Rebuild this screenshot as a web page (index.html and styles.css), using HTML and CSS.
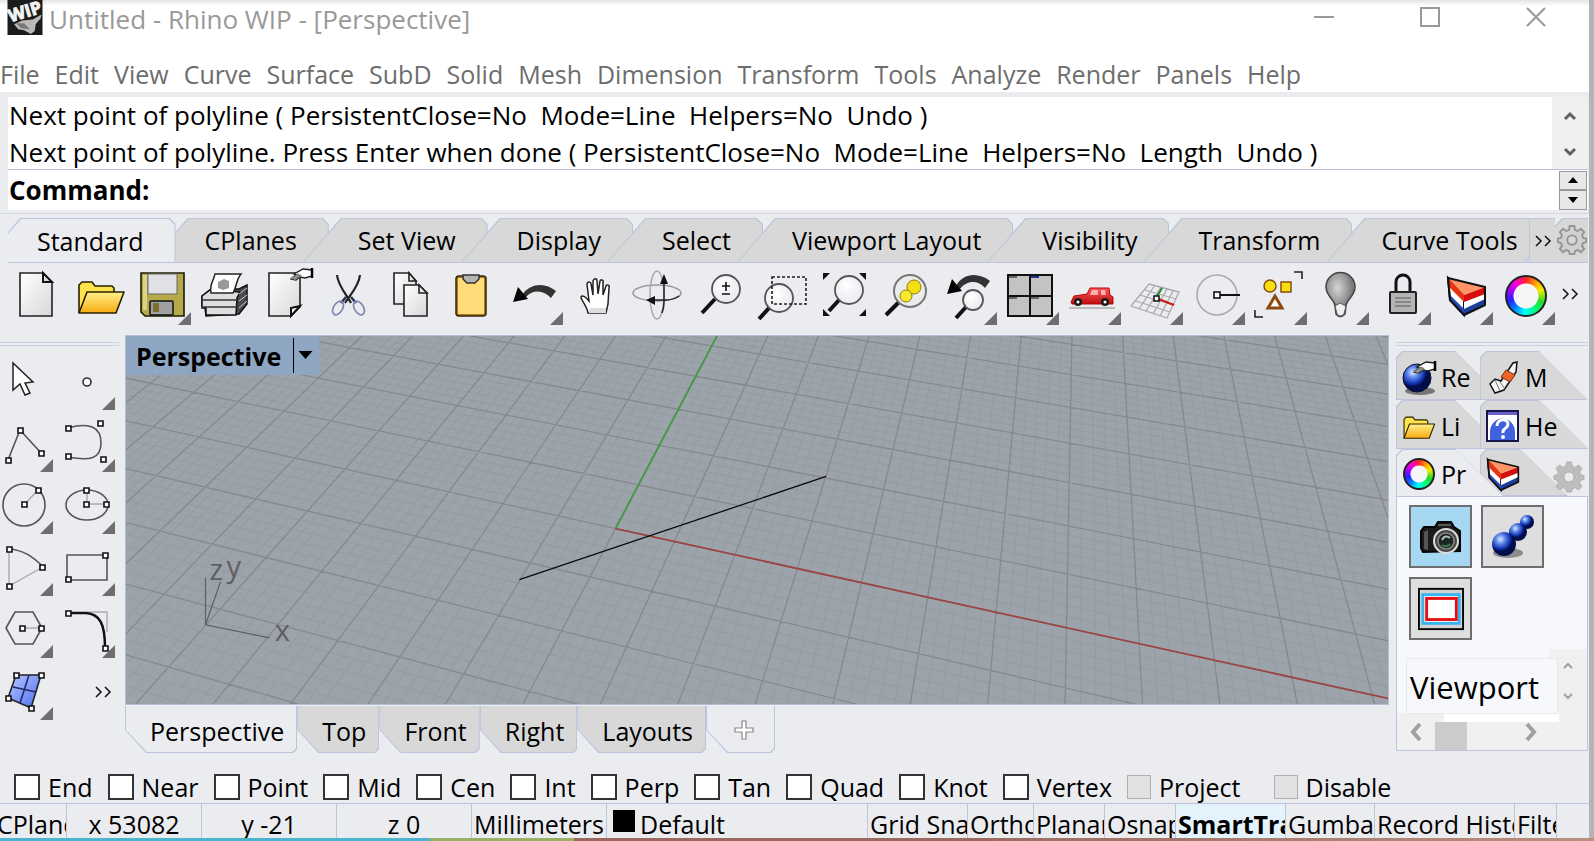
FILE: index.html
```html
<!DOCTYPE html>
<html lang="en">
<head>
<meta charset="utf-8">
<title>Untitled - Rhino WIP - [Perspective]</title>
<link rel="stylesheet" href="styles.css">
</head>
<body>
<svg class="defs" aria-hidden="true">
  <defs>
    <linearGradient id="paper" x1="0" y1="0" x2="1" y2="1"><stop offset="0" stop-color="#fff"/><stop offset="1" stop-color="#d8d8d8"/></linearGradient>
    <linearGradient id="gold" x1="0" y1="0" x2="0" y2="1"><stop offset="0" stop-color="#fff08a"/><stop offset="1" stop-color="#f7ab13"/></linearGradient>
    <linearGradient id="steel" x1="0" y1="0" x2="1" y2="1"><stop offset="0" stop-color="#f4f4f4"/><stop offset="1" stop-color="#808080"/></linearGradient>
    <linearGradient id="red" x1="0" y1="0" x2="0" y2="1"><stop offset="0" stop-color="#ff5a5a"/><stop offset="1" stop-color="#c00d0d"/></linearGradient>
    <linearGradient id="violet" x1="0" y1="0" x2="1" y2="1"><stop offset="0" stop-color="#b9c8ff"/><stop offset="1" stop-color="#4a6cf0"/></linearGradient>
    <radialGradient id="lens" cx=".4" cy=".35"><stop offset="0" stop-color="#fff"/><stop offset="1" stop-color="#eceef2"/></radialGradient>
    <radialGradient id="ball" cx=".35" cy=".3"><stop offset="0" stop-color="#dbe8ff"/><stop offset=".4" stop-color="#5d86ea"/><stop offset=".85" stop-color="#0a2aa4"/><stop offset="1" stop-color="#020d4a"/></radialGradient>
    <radialGradient id="bulb" cx=".4" cy=".35"><stop offset="0" stop-color="#d5d5d5"/><stop offset="1" stop-color="#7c7c7c"/></radialGradient>
    <symbol id="i-layers" viewBox="0 0 48 48">
      <path d="M7 8L23 25L23 45L9 30Z" fill="#fff" stroke="#111" stroke-width="2"/>
      <path d="M7 8L23 25V32L8 17Z" fill="#e63313"/><path d="M8 24L23 39V45L9 30Z" fill="#2448b8"/>
      <path d="M23 25L44 17V34L23 45Z" fill="#fff"/><path d="M23 25L44 17V24L23 32Z" fill="#d40d0d"/><path d="M23 39L44 29V35L23 45Z" fill="#1c3f9e"/>
      <path d="M7 8L44 17L23 25Z" fill="#ff9468"/><path d="M7 8L44 17V35L23 45L9 30Z" fill="none" stroke="#111" stroke-width="2" stroke-linejoin="round"/>
    </symbol>
    <symbol id="i-folder" viewBox="0 0 48 48">
      <path d="M2 43V15l3-3h10l3 4h17l2 2v8" fill="#ffe34d" stroke="#2b2000" stroke-width="1.6"/><path d="M2 43L10 22H47L39 43Z" fill="url(#gold)" stroke="#2b2000" stroke-width="1.6" stroke-linejoin="round"/>
    </symbol>
    <symbol id="i-glove" viewBox="0 0 24 14">
      <path d="M1 12L6 8L4 7L13 2L22 3V9L15 11L10 10L6 13Z" fill="#fff" stroke="#222" stroke-width="1.4"/><path d="M1 12L9 7M4 13L11 8" stroke="#777" stroke-width="2"/><path d="M22 1V11" stroke="#000" stroke-width="2.5"/>
    </symbol>
    <symbol id="i-gear" viewBox="0 0 32 32">
      <path d="M13.500 1h5l.7 4.200 2.800 1.200L25.500 4 29 7.500l-2.400 3.500 1.200 2.800 3.200.7v4l-3.200.7-1.200 2.800 2.400 3.500-3.500 3.500-3.500-2.400-2.800 1.200-.7 3.200h-5l-.7-3.200L10 26.600 6.500 29 3 25.500 5.400 22l-1.200-2.800L1 18.500v-4l3.200-.7L5.400 11 3 7.500 6.500 4 10 6.400l2.800-1.200zM16 11a5 5 0 1 0 0 10a5 5 0 1 0 0-10z" fill-rule="evenodd"/>
    </symbol>
    <symbol id="i-more" viewBox="0 0 18 12"><path d="M2 1L7 6L2 11M11 1L16 6L11 11" fill="none" stroke="#111" stroke-width="1.500"/></symbol>
  </defs>
</svg>

<div class="window">
  <header class="titlebar">
    <svg class="app-icon" viewBox="0 0 36 36" aria-hidden="true">
      <rect width="36" height="36" fill="#1b1b1b"/>
      <path d="M2 19L7 25L15 21L26 20L35 15L34 19L29 25L28 32L24 35L17 31L11 30Z" fill="#b9b9b9"/><path d="M9 24L14 29L23 30L17 24Z" fill="#777"/>
      <g class="wip" transform="rotate(-17 18 10)"><text x="0" y="18">WIP</text></g>
    </svg>
    <h1 class="title">Untitled - Rhino WIP - [Perspective]</h1>
    <div class="caption">
      <button aria-label="Minimize"><svg viewBox="0 0 20 20"><path d="M0 10H20" stroke-width="2"/></svg></button>
      <button aria-label="Maximize"><svg viewBox="0 0 20 20"><path d="M1 1H19V19H1Z" stroke-width="2"/></svg></button>
      <button aria-label="Close"><svg viewBox="0 0 20 20"><path d="M1 1L19 19M19 1L1 19" stroke-width="2"/></svg></button>
    </div>
  </header>

  <nav class="menu">
    <button>File</button><button>Edit</button><button>View</button><button>Curve</button><button>Surface</button><button>SubD</button><button>Solid</button><button>Mesh</button><button>Dimension</button><button>Transform</button><button>Tools</button><button>Analyze</button><button>Render</button><button>Panels</button><button>Help</button>
  </nav>

  <section class="command">
    <div class="history">
      <div class="lines"><p>Next point of polyline ( PersistentClose=No  Mode=Line  Helpers=No  Undo )</p><p>Next point of polyline. Press Enter when done ( PersistentClose=No  Mode=Line  Helpers=No  Length  Undo )</p></div>
      <div class="history-scroll">
        <button aria-label="Scroll up"><svg viewBox="0 0 12 10"><path d="M1 8L6 3L11 8"/></svg></button>
        <button aria-label="Scroll down"><svg viewBox="0 0 12 10"><path d="M1 2L6 7L11 2"/></svg></button>
      </div>
    </div>
    <div class="prompt">
      <label for="cmd">Command:</label><input id="cmd" type="text">
      <div class="spinner">
        <button aria-label="Previous"><svg viewBox="0 0 10 6"><path d="M0 6L5 0L10 6Z"/></svg></button>
        <button aria-label="Next"><svg viewBox="0 0 10 6"><path d="M0 0H10L5 6Z"/></svg></button>
      </div>
    </div>
  </section>

  <div class="toolbars">
    <div class="tabs">
      <div class="tab-list">
        <button class="tab active">Standard</button><button class="tab">CPlanes</button><button class="tab">Set View</button><button class="tab">Display</button><button class="tab">Select</button><button class="tab">Viewport Layout</button><button class="tab">Visibility</button><button class="tab">Transform</button><button class="tab">Curve Tools</button><button class="tab next" aria-label="Surface Tools"></button>
      </div>
      <div class="tabs-end">
        <button class="tabs-more" aria-label="More tabs"><svg viewBox="0 0 18 12"><use href="#i-more"/></svg></button>
        <button class="tabs-gear" aria-label="Options"><svg viewBox="0 0 32 32"><use href="#i-gear"/></svg></button>
      </div>
    </div>
    <div class="tools">
      <button class="tool" aria-label="New"><svg viewBox="0 0 48 48"><path d="M5 3H28L37 13V46H5Z" fill="url(#paper)" stroke="#222" stroke-width="1.6"/><path d="M28 3V12H37Z" fill="#ddd" stroke="#111" stroke-width="2"/></svg></button>
      <button class="tool" aria-label="Open"><svg viewBox="0 0 48 48"><use href="#i-folder" width="48" height="48"/></svg></button>
      <button class="tool more" aria-label="Save"><svg viewBox="0 0 48 48"><path d="M2 3H45V46H6L2 42Z" fill="#b5a94a" stroke="#1d1a05" stroke-width="1.600"/><path d="M4 5H8V40H4Z" fill="#dcd28a"/><rect x="9" y="4" width="29" height="20" fill="#dfe1e4" stroke="#666"/><rect x="11" y="31" width="23" height="14" rx="1" fill="#9fa0a2" stroke="#111" stroke-width="1.500"/><rect x="14" y="33" width="6" height="9" fill="#7b6f2a"/></svg></button>
      <button class="tool" aria-label="Print"><svg viewBox="0 0 48 48"><path d="M1 26L10 19H38L46 15V34L38 44L5 46L4 38L1 36Z" fill="#4a4a4a" stroke="#111" stroke-width="1.500"/><path d="M1 26L9 20L39 22L36 28L35 45H5V38H1Z" fill="#dedede" stroke="#111" stroke-width="1.500"/><path d="M1 30H36M2 37H36" stroke="#333" stroke-width="1.500"/><path d="M10 23C8 15 13 10 14 4H40C35 10 36 16 32 23Z" fill="#fff" stroke="#222" stroke-width="1.500"/><path d="M17 12L23 9L28 11V18L22 20L17 18Z" fill="#999"/><path d="M38 24L46 18M38 31L46 25M38 38L46 31" stroke="#ccc"/></svg></button>
      <button class="tool" aria-label="Document properties"><svg viewBox="0 0 48 48"><path d="M6 3H37V37L28 46H6Z" fill="url(#paper)" stroke="#222" stroke-width="1.600"/><path d="M28 46V38L37 36Z" fill="#fff" stroke="#111" stroke-width="2"/><use href="#i-glove" x="27" y="-3" width="24" height="14"/></svg></button>
      <button class="tool" aria-label="Cut"><svg viewBox="0 0 48 48" fill="none"><path d="M12 5C13 16 22 25 26 33M35 5C34 16 25 25 20 33" stroke="#222" stroke-width="2.200"/><path d="M21 27L16 33M26 27L31 33" stroke="#2c3260" stroke-width="2.500"/><ellipse cx="13" cy="38" rx="4.500" ry="7.500" transform="rotate(32 13 38)" stroke="#8089b2" stroke-width="1.800"/><ellipse cx="34" cy="38" rx="4.500" ry="7.500" transform="rotate(-32 34 38)" stroke="#8089b2" stroke-width="1.800"/></svg></button>
      <button class="tool" aria-label="Copy"><svg viewBox="0 0 48 48" fill="url(#paper)" stroke="#222" stroke-width="1.600"><path d="M7 3H22L29 11V34H7Z"/><path d="M22 3V11H29Z"/><path d="M17 15H32L40 23V46H17Z"/><path d="M32 15V23H40Z"/></svg></button>
      <button class="tool" aria-label="Paste"><svg viewBox="0 0 48 48"><rect x="7" y="6" width="30" height="40" rx="3" fill="#a87c20" stroke="#33250a" stroke-width="1.500"/><rect x="9" y="8" width="26" height="36" rx="1" fill="#ffdc78"/><path d="M14 5H30V9L26 13H18L14 9Z" fill="#b5b5b5" stroke="#333" stroke-width="1.500"/></svg></button>
      <button class="tool more" aria-label="Undo"><svg viewBox="0 0 48 48"><path d="M11 25C19 13 34 12 45 21L40 28C33 20 22 19 15 27Z" fill="#333"/><path d="M2 32L7 17L17 29Z" fill="#050505"/></svg></button>
      <button class="tool" aria-label="Pan"><svg viewBox="0 0 48 48"><path d="M15 43C14 36 8 30 8 27C9 25 12 26 16 31L14 14C15 11 18 12 18 14L20 25L20 11C21 8 24 8 24 11L25 24L27 11C28 9 31 10 30 13L30 25L33 16C34 14 37 15 36 18L35 34L33 43Z" fill="#fff" stroke="#222" stroke-width="1.500"/><path d="M17 38H33V43H16Z" fill="#ddd"/></svg></button>
      <button class="tool" aria-label="Rotate view"><svg viewBox="0 0 48 48" fill="none"><ellipse cx="22" cy="23" rx="24" ry="8" stroke="#999" stroke-width="1.500"/><ellipse cx="22" cy="25" rx="7" ry="24" stroke="#aaa" stroke-width="1.500"/><path d="M29 10V32Q29 38 27 43M14 30H31Q38 30 44 26" stroke="#222" stroke-width="1.500"/><path d="M25 14L29 4L33 14ZM20 26V35L11 30Z" fill="#111"/></svg></button>
      <button class="tool" aria-label="Zoom"><svg viewBox="0 0 48 48"><path d="M18 29L5 43" stroke="#111" stroke-width="4"/><circle cx="29" cy="19" r="14" fill="url(#lens)" stroke="#555" stroke-width="1.800"/><path d="M25 16H33M29 12V21M25 24H33" stroke="#111" stroke-width="1.600"/></svg></button>
      <button class="tool" aria-label="Zoom window"><svg viewBox="0 0 48 48"><path d="M10 38L0 49" stroke="#111" stroke-width="4"/><circle cx="20" cy="28" r="14" fill="url(#lens)" stroke="#555" stroke-width="1.800"/><rect x="13" y="7" width="34" height="27" fill="none" stroke="#222" stroke-width="1.600" stroke-dasharray="3 2"/></svg></button>
      <button class="tool" aria-label="Zoom extents"><svg viewBox="0 0 48 48"><path d="M18 30L8 41" stroke="#111" stroke-width="4"/><circle cx="28" cy="20" r="14" fill="url(#lens)" stroke="#555" stroke-width="1.800"/><path d="M2 3H9L2 10ZM38 3H45V10ZM2 39V46H9ZM45 39V46H38Z" fill="#111"/></svg></button>
      <button class="tool" aria-label="Zoom selected"><svg viewBox="0 0 48 48"><path d="M16 32L3 45" stroke="#111" stroke-width="4"/><circle cx="27" cy="21" r="16" fill="#ececec" stroke="#777" stroke-width="2"/><circle cx="31" cy="17" r="7" fill="#f5df12" stroke="#8c7d10"/><circle cx="23" cy="26" r="6" fill="#f8e92c" stroke="#8c7d10"/></svg></button>
      <button class="tool more" aria-label="Undo view change"><svg viewBox="0 0 48 48"><path d="M11 16C18 3 33 2 45 11L40 18C33 10 22 10 15 19Z" fill="#333"/><path d="M2 24L7 9L17 21Z" fill="#050505"/><path d="M21 37L11 48" stroke="#111" stroke-width="4"/><circle cx="28" cy="30" r="10" fill="url(#lens)" stroke="#555" stroke-width="1.800"/></svg></button>
      <button class="tool more" aria-label="Four viewports"><svg viewBox="0 0 48 48"><path d="M1 5H45V46H1Z" fill="#c3c3c3" stroke="#111" stroke-width="2"/><path d="M23 5V46M1 26H45" stroke="#111" stroke-width="2"/><path d="M2 7H10M2 28H10M24 28H32" stroke="#666" stroke-width="2"/><path d="M24 7H32" stroke="#1a3391" stroke-width="2"/></svg></button>
      <button class="tool more" aria-label="Set view"><svg viewBox="0 0 48 48"><path d="M0 38H46" stroke="#bbb" stroke-width="2"/><path d="M2 32L5 26L18 24L21 18H40L41 25L44 27V34H3Z" fill="url(#red)" stroke="#b10909"/><path d="M23 20L21 25H29V20ZM32 20V25H37L36 20Z" fill="#ffb0b0"/><circle cx="9" cy="32" r="4" fill="#1a1a1a"/><circle cx="36" cy="32" r="4" fill="#1a1a1a"/><circle cx="9" cy="32" r="1.500" fill="#fff"/><circle cx="36" cy="32" r="1.500" fill="#fff"/></svg></button>
      <button class="tool more" aria-label="Construction plane"><svg viewBox="0 0 48 48" fill="none"><path d="M18 14L48 22L36 48L0 36ZM14 20L45 29M9 25L42 35M5 31L39 42M24 15L8 39M30 17L15 41M36 19L22 44M42 21L29 46" stroke="#aaa" stroke-width="1.300"/><path d="M25 28L31 18" stroke="#1f8e2f" stroke-width="2"/><path d="M25 28L43 35" stroke="#d01818" stroke-width="2"/><rect x="23" y="26" width="5" height="5" fill="#fff" stroke="#111" stroke-width="1.500"/></svg></button>
      <button class="tool more" aria-label="Object snap"><svg viewBox="0 0 48 48"><circle cx="24" cy="25" r="20" fill="none" stroke="#aaa" stroke-width="1.600"/><path d="M24 25H47" stroke="#111" stroke-width="2"/><rect x="21" y="22" width="6" height="6" fill="#fff" stroke="#111" stroke-width="1.600"/></svg></button>
      <button class="tool more" aria-label="Select"><svg viewBox="0 0 48 48"><circle cx="15" cy="16" r="6" fill="#f7e00d" stroke="#8c4a10" stroke-width="1.500"/><rect x="26" y="12" width="10" height="10" fill="#f7e00d" stroke="#8c4a10" stroke-width="1.500"/><path d="M20 26L27 38H13Z" fill="#fff" stroke="#8c4a10" stroke-width="3"/><path d="M39 2H47V9M0 40V47H8" fill="none" stroke="#222" stroke-width="1.600"/></svg></button>
      <button class="tool more" aria-label="Hide objects"><svg viewBox="0 0 48 48"><path d="M18 36C18 30 9 26 9 17A14.500 14.500 0 0 1 38 17C38 26 29 30 29 36L28 44Q23 49 19 44Z" fill="url(#bulb)" stroke="#444" stroke-width="1.500"/><path d="M18 36L23 33L29 36L27 44Q23 48 20 44Z" fill="#eee" stroke="#555"/></svg></button>
      <button class="tool more" aria-label="Lock objects"><svg viewBox="0 0 48 48"><path d="M17 23V12a7 7 0 0 1 14 0V23" fill="none" stroke="#111" stroke-width="3"/><rect x="11" y="22" width="26" height="21" rx="1" fill="#b4b4b4" stroke="#222" stroke-width="2"/><path d="M16 28H32M16 32H32M16 36H32" stroke="#777" stroke-width="1.500"/></svg></button>
      <button class="tool more" aria-label="Edit layers"><svg viewBox="0 0 48 48"><use href="#i-layers" width="48" height="48"/></svg></button>
      <button class="tool more" aria-label="Object properties"><span class="wheel"></span></button>
      <button class="tools-more" aria-label="More tools"><svg viewBox="0 0 18 12"><use href="#i-more"/></svg></button>
    </div>
  </div>

  <main class="workspace">
    <aside class="side-tools">
      <button class="tool" aria-label="Select objects"><svg viewBox="0 0 48 48"><path d="M13 6V33L20 27L25 38L30 36L25 26L33 25Z" fill="#fff" stroke="#222" stroke-width="1.500"/></svg></button>
      <button class="tool more" aria-label="Point"><svg viewBox="0 0 48 48"><circle cx="25" cy="25" r="4" fill="#fff" stroke="#333" stroke-width="1.600"/></svg></button>
      <button class="tool more" aria-label="Polyline"><svg viewBox="0 0 48 48"><path d="M8 41L20 11L42 35" class="ln"/><path class="pt" d="M6 39h5v5h-5zM18 9h5v5h-5zM39 32h5v5h-5z"/></svg></button>
      <button class="tool more" aria-label="Curve"><svg viewBox="0 0 48 48"><path d="M6 9C28 3 39 8 39 24C39 40 28 42 6 38" class="ln"/><path class="pt" d="M4 7h5v5h-5zM36 2h5v5h-5zM39 38h5v5h-5zM4 35h5v5h-5z"/></svg></button>
      <button class="tool more" aria-label="Circle"><svg viewBox="0 0 48 48"><circle cx="24" cy="24" r="21" class="ln"/><path d="M24 24L38 9" class="thin"/><path class="pt" d="M22 21h5v5h-5zM36 7h5v5h-5z"/></svg></button>
      <button class="tool more" aria-label="Ellipse"><svg viewBox="0 0 48 48"><ellipse cx="25" cy="24" rx="21" ry="15" class="ln"/><path d="M25 9V23H45" class="thin"/><path class="pt" d="M22 7h5v5h-5zM22 21h5v5h-5zM42 21h5v5h-5z"/></svg></button>
      <button class="tool more" aria-label="Arc"><svg viewBox="0 0 48 48"><path d="M9 6V43L43 24" class="thin"/><path d="M9 6C23 7 34 14 43 24" class="ln"/><path class="pt" d="M7 4h5v5h-5zM40 22h5v5h-5zM7 41h5v5h-5z"/></svg></button>
      <button class="tool more" aria-label="Rectangle"><svg viewBox="0 0 48 48"><path d="M5 12H45V37H5Z" class="ln"/><path class="pt" d="M41 10h5v5h-5zM4 34h5v5h-5z"/></svg></button>
      <button class="tool more" aria-label="Polygon"><svg viewBox="0 0 48 48"><path d="M6 23L15 7H33L42 23L33 39H15Z" class="ln"/><path d="M23 23H42" class="thin"/><path class="pt" d="M20 21h5v5h-5zM39 21h5v5h-5z"/></svg></button>
      <button class="tool more" aria-label="Fillet curves"><svg viewBox="0 0 48 48"><path d="M25 7H45V27" class="thin"/><path d="M6 8H24C38 9 43 19 43 43" fill="none" stroke="#111" stroke-width="2.500"/><path class="pt" d="M4 6h5v5h-5zM41 41h5v5h-5z"/></svg></button>
      <button class="tool more" aria-label="Surface"><svg viewBox="0 0 48 48"><path d="M16 8H41L31 41L8 31Z" fill="url(#violet)" stroke="#222" stroke-width="1.600"/><path d="M29 8L20 36M13 20L36 25" stroke="#222b66" stroke-width="1.600"/><path class="pt" d="M14 6h5v5h-5zM39 6h5v5h-5zM29 39h5v5h-5zM6 29h5v5h-5z"/></svg></button>
      <button class="tools-more" aria-label="More tools"><svg viewBox="0 0 18 12"><use href="#i-more"/></svg></button>
    </aside>

    <section class="center">
      <div class="viewport">
        <svg class="scene" viewBox="126 336 1262 367" preserveAspectRatio="xMidYMid slice" role="img" aria-label="Perspective view">
          <path id="minor" fill="none" stroke="#949ca3" stroke-width="1"/>
          <path id="major" fill="none" stroke="#878890" stroke-width="1.300"/>
          <path id="axis-x" fill="none" stroke="#9c4544" stroke-width="1.800"/>
          <path id="axis-y" fill="none" stroke="#429843" stroke-width="1.800"/>
          <path d="M520 579L826 476" stroke="#0c0c0c" stroke-width="1.300"/>
          <path d="M207 577V624L271 637M207 624L222 581" fill="none" stroke="#5f5f61" stroke-width="1.200"/>
          <g class="axis-label"><text x="211" y="579">z</text><text x="228" y="576">y</text><text x="276" y="640">x</text></g>
        </svg>
        <div class="view-title"><span>Perspective</span><button aria-label="View menu"><svg viewBox="0 0 14 8"><path d="M0 0H14L7 8Z"/></svg></button></div>
      </div>
      <div class="view-tabs">
        <button class="view-tab active">Perspective</button><button class="view-tab">Top</button><button class="view-tab">Front</button><button class="view-tab">Right</button><button class="view-tab">Layouts</button><button class="view-tab active add" aria-label="Add layout"><svg viewBox="0 0 20 20"><path d="M8 1h4v7h7v4h-7v7h-4v-7h-7v-4h7z" fill="#fff" stroke="#888" stroke-width="1.200"/></svg></button>
      </div>
    </section>

    <aside class="panel">
      <div class="panel-tabs">
        <button class="ptab"><svg viewBox="0 0 34 34"><ellipse cx="18" cy="31" rx="15" ry="4" fill="#777"/><circle cx="15" cy="18" r="14" fill="url(#ball)" stroke="#0a1030"/><use href="#i-glove" x="11" y="0" width="24" height="14"/></svg>Re</button>
        <button class="ptab"><svg viewBox="0 0 34 34"><path d="M4 24L9 19L15 21L27 3L31 2L30 12L18 30L9 33Z" fill="#f5f5f5" stroke="#111" stroke-width="1.500"/><path d="M20 10L29 15L24 22L15 17Z" fill="#f0642a" stroke="#7a2f10"/><path d="M9 20L14 31M14 22L19 29" stroke="#777"/></svg>M</button>
        <button class="ptab"><svg viewBox="0 0 50 50"><use href="#i-folder" width="50" height="48"/></svg>Li</button>
        <button class="ptab"><svg viewBox="0 0 34 34"><rect x="1" y="2" width="31" height="30" fill="#fff" stroke="#16164a" stroke-width="2"/><path d="M2 3H31V6H2Z" fill="#6b62c8"/><path d="M4 31V23A12 13 0 0 1 29 23V31Z" fill="#3f63dc"/><path d="M11 17C11 9 22 9 22 15C22 20 16 19 17 24" fill="none" stroke="#fff" stroke-width="3"/><circle cx="17" cy="28" r="2" fill="#fff"/></svg>He</button>
        <button class="ptab active"><span class="wheel small"></span>Pr</button>
        <button class="ptab short" aria-label="Layers"><svg viewBox="5 5 41 41"><use href="#i-layers" width="48" height="48"/></svg></button>
        <button class="panel-gear" aria-label="Panel options"><svg viewBox="0 0 32 32"><use href="#i-gear"/></svg></button>
      </div>
      <div class="panel-body">
        <div class="modes">
          <button class="mode on" aria-label="Viewport properties"><svg viewBox="0 0 46 46"><path d="M3 17L6 13H17L20 8H33L36 13L42 17V37L5 38L3 34Z" fill="#1b1b1b" stroke="#050505" stroke-width="2"/><path d="M6 18V35L10 36V16Z" fill="#555"/><path d="M20 11H33" stroke="#555" stroke-width="2"/><circle cx="28" cy="27" r="12" fill="#4a4a4a" stroke="#ddd" stroke-width="2"/><circle cx="28" cy="27" r="8" fill="#1b2522" stroke="#888" stroke-width="1.500"/><path d="M24 26Q27 20 32 24" stroke="#a9c7b3" stroke-width="2" fill="none"/><path d="M24 31Q28 34 32 30" stroke="#3c7a4d" stroke-width="2" fill="none"/></svg></button>
          <button class="mode" aria-label="Material"><svg viewBox="0 0 46 46"><ellipse cx="18" cy="39" rx="15" ry="5" fill="#8c8c8c"/><circle cx="37" cy="8" r="7" fill="url(#ball)"/><circle cx="28" cy="18" r="9" fill="url(#ball)"/><circle cx="14" cy="30" r="12" fill="url(#ball)"/></svg></button>
          <button class="mode" aria-label="Safe frame"><svg viewBox="0 0 48 44"><rect x="1" y="1" width="46" height="42" fill="#d2d2d2" stroke="#050505" stroke-width="2"/><rect x="5" y="7" width="38" height="30" fill="#f2f2f2" stroke="#35b5f2" stroke-width="3"/><rect x="9" y="11" width="31" height="22" fill="#fff" stroke="#e60f14" stroke-width="3"/></svg></button>
        </div>
        <div class="prop-area">
          <div class="prop">Viewport</div>
          <div class="v-scroll"><svg viewBox="0 0 10 7"><path d="M1 6L5 2L9 6"/></svg><svg viewBox="0 0 10 7"><path d="M1 1L5 5L9 1"/></svg></div>
        </div>
        <div class="h-scroll"><svg viewBox="0 0 12 18"><path d="M10 1L3 9L10 17"/></svg><span class="thumb"></span><svg viewBox="0 0 12 18"><path d="M2 1L9 9L2 17"/></svg></div>
      </div>
    </aside>
  </main>

  <div class="osnap">
    <label><input type="checkbox">End</label><label><input type="checkbox">Near</label><label><input type="checkbox">Point</label><label><input type="checkbox">Mid</label><label><input type="checkbox">Cen</label><label><input type="checkbox">Int</label><label><input type="checkbox">Perp</label><label><input type="checkbox">Tan</label><label><input type="checkbox">Quad</label><label><input type="checkbox">Knot</label><label><input type="checkbox">Vertex</label><label class="wide"><input type="checkbox" disabled>Project</label><label class="wide"><input type="checkbox" disabled>Disable</label>
  </div>

  <footer class="status">
    <button>CPlane</button><span class="mid">x 53082</span><span class="mid">y -21</span><span class="mid">z 0</span><span>Millimeters</span><button class="layer"><i></i>Default</button><button>Grid Snap</button><button>Ortho</button><button>Planar</button><button>Osnap</button><button class="on">SmartTrack</button><button>Gumball</button><button>Record History</button><button>Filter</button><span class="end"></span>
  </footer>
</div>
<script src="grid.js"></script>
</body>
</html>
```
FILE: styles.css
```css
* { box-sizing: border-box; }
body {
  margin: 0;
  min-height: 100vh;
  display: flex;
  padding: 0 5px 3px 0;
  font: 25px/36px "Open Sans", "Noto Sans", sans-serif;
  color: #000;
  background:
    linear-gradient(90deg, #4bb3cf 0 27%, #9ab062 27% 36%, #9a6a60 36% 60%, #b98f80) bottom / 100% 3px no-repeat,
    linear-gradient(90deg, #8e8b62 0 2px, #a2a2a6 2px, #b4b4b8);
}
button { font: inherit; color: inherit; border: 0; padding: 0; margin: 0; background: none; white-space: nowrap; }
svg { display: block; overflow: visible; }
.defs { position: absolute; width: 0; height: 0; }
.window { flex: 1; min-width: 0; display: flex; flex-direction: column; background: #ebecf0; overflow: hidden; }

.titlebar { display: flex; align-items: flex-start; height: 55px; padding-left: 7px; gap: 6px; background: linear-gradient(#e4e4e4, #fff 6px); }
.app-icon { width: 36px; height: 35px; flex: none; overflow: hidden; }
.wip { font: bold 18px "Open Sans", sans-serif; fill: #f2f2f2; stroke: #f2f2f2; }
.title { margin: 0; line-height: 38px; font-size: 26px; font-weight: 400; color: #999; flex: 1; }
.caption { display: flex; gap: 86px; padding: 7px 43px 0 0; }
.caption button { width: 20px; height: 20px; }
.caption svg { width: 20px; height: 20px; fill: none; stroke: #999; }

.menu { display: flex; gap: 15px; height: 37px; background: #fff; color: #6d6d6d; }
.menu button { line-height: 36px; }

.command { margin: 5px 0 0; padding: 0 1px 0 8px; }
.history { display: flex; height: 72px; background: #fff; }
.lines { flex: 1; min-width: 0; padding-left: 1px; overflow: hidden; font-size: 26px; }
.lines p { margin: 0; line-height: 37px; white-space: pre; }
.history-scroll { width: 36px; background: #f0f0f0; display: flex; flex-direction: column; align-items: center; justify-content: space-between; padding: 14px 0 12px; }
.history-scroll svg { width: 12px; height: 10px; fill: none; stroke: #606060; stroke-width: 3; }
.prompt { display: flex; height: 41px; background: #fff; border-top: 1px solid #b8c4d2; padding-left: 1px; align-items: center; }
.prompt label { font-size: 26px; font-weight: 700; }
.prompt input { flex: 1; border: 0; outline: 0; background: none; font: inherit; height: 36px; }
.spinner { width: 28px; height: 39px; margin-right: 1px; display: flex; flex-direction: column; }
.spinner button { flex: 1; background: #e8e8e8; border: 1px solid #999; display: grid; place-items: center; }
.spinner svg { width: 10px; height: 6px; }

.toolbars { margin-top: 3px; border-top: 1px solid #d5d9e4; padding: 4px 0 0; }
.tabs { position: relative; height: 45px; margin: 0 1px 0 8px; overflow: hidden; border-bottom: 1px solid #bcc5dd; }
.tab-list { display: flex; }
.tab { position: relative; isolation: isolate; flex: none; height: 44px; line-height: 44px; padding: 0 32px 0 55px; margin-left: -26px; }
.tab:first-child { margin-left: -26px; }
.tab::before, .tab::after { content: ""; position: absolute; z-index: -1; inset: 0; background: #bcc5dd; clip-path: polygon(0 100%, 38px 0, calc(100% - 6px) 0, 100% 6px, 100% 100%); }
.tab::after { inset: 1px 1px 0 1px; background: #d8d8d8; }
.tab.active { z-index: 2; height: 45px; }
.tab.active::after { background: #ebecf0; }
.tab.next { flex: 1; }
.tabs-end { position: absolute; z-index: 3; right: 0; top: 0; display: flex; height: 44px; }
.tabs-more { width: 26px; border-left: 1px solid #bcc5dd; border-top: 1px solid #bcc5dd; background: #d8d8d8; display: grid; place-items: center; }
.tabs-gear { width: 33px; display: grid; place-items: center; }
.tabs-more svg, .tools-more svg { width: 18px; height: 12px; }
.tabs-gear svg { width: 30px; height: 30px; fill: #d0d0d0; stroke: #949494; stroke-width: 2; }
.tools { display: flex; height: 72px; padding-left: 5px; }
.tool { position: relative; flex: none; width: 62px; height: 62px; padding: 7px 4px 7px 10px; }
.tool svg { width: 48px; height: 48px; }
.tool.more::after { content: ""; position: absolute; right: 0; bottom: 0; width: 13px; height: 13px; background: #6e6e70; clip-path: polygon(100% 0, 100% 100%, 0 100%); }
.tools-more { width: 30px; height: 62px; display: grid; place-items: center; }
.wheel { flex: none; display: block; width: 42px; height: 42px; margin: 4px 0 0 2px; border: 2px solid #222; border-radius: 50%; background: radial-gradient(circle, #f6f6f8 0 12px, transparent 13px), conic-gradient(#f22, #fb0 45deg, #ee0 70deg, #2d2 110deg, #0f8 150deg, #0ff 185deg, #08f 220deg, #22f 255deg, #a0f 290deg, #f0c 325deg, #f22); }
.wheel.small { width: 32px; height: 32px; margin: 0 1px; background: radial-gradient(circle, #f6f6f8 0 8px, transparent 9px), conic-gradient(#f22, #fb0 45deg, #ee0 70deg, #2d2 110deg, #0f8 150deg, #0ff 185deg, #08f 220deg, #22f 255deg, #a0f 290deg, #f0c 325deg, #f22); }

.workspace { flex: 1; min-height: 0; display: flex; }
.side-tools { width: 119px; margin: 7px 6px 0 0; padding: 5px 0 0; border-top: 1px solid #c9d1e3; box-shadow: inset 0 2px #ebecf0, inset 0 3px #c9d1e3; display: grid; grid-template-columns: 53px 62px; grid-auto-rows: 62px; align-content: start; }
.side-tools .tool { width: auto; padding: 9px 5px 5px 0; display: flex; justify-content: flex-end; }
.side-tools .tools-more { justify-self: end; width: 24px; height: 67px; }
.ln { fill: none; stroke: #555; stroke-width: 1.6px; }
.thin { fill: none; stroke: #aaa; stroke-width: 1.4px; }
.pt { fill: #fff; stroke: #111; stroke-width: 1.6px; }

.center { flex: 1; min-width: 0; display: flex; flex-direction: column; }
.viewport { position: relative; flex: 1; min-height: 0; border: 1px solid #b4bfd3; background: #9ca3ab; overflow: hidden; }
.scene { position: absolute; inset: 0; width: 100%; height: 100%; overflow: hidden; }
.axis-label { font: 29px "Open Sans", sans-serif; fill: #5f5f61; }
.view-title { position: absolute; left: 0; top: 0; display: flex; height: 39px; padding-left: 10px; background: #8ea6c2; font-size: 25px; font-weight: 700; line-height: 41px; }
.view-title button { width: 26px; margin: 2px 0 2px 12px; border-left: 1px solid #000; padding: 0 0 2px 4px; }
.view-title svg { width: 15px; height: 8px; }
.view-tabs { display: flex; height: 56px; padding-top: 1px; }
.view-tab { position: relative; isolation: isolate; height: 47px; line-height: 50px; padding: 0 13px 0 25px; }
.view-tab::before, .view-tab::after { content: ""; position: absolute; z-index: -1; inset: 0; background: #bcc5dd; clip-path: polygon(0 0, 100% 0, 100% calc(100% - 4px), calc(100% - 4px) 100%, 21px 100%, 0 24px); }
.view-tab::after { inset: 0 1px 1px 1px; background: #d8d8d8; }
.view-tab.active::after { background: #ebecf0; }
.view-tab.add { width: 69px; }
.view-tab.add svg { width: 20px; height: 20px; margin-left: 3px; }

.panel { width: 192px; margin: 7px 1px 10px 7px; padding-top: 8px; border-top: 1px solid #c9d1e3; box-shadow: inset 0 2px #ebecf0, inset 0 3px #c9d1e3; display: flex; flex-direction: column; }
.panel-tabs { position: relative; display: grid; grid-template-columns: 84px 1fr; grid-template-rows: 49px 49px 47px; }
.ptab { position: relative; isolation: isolate; width: 108px; padding: 2px 0 0 6px; display: flex; align-items: center; gap: 5px; text-align: left; }
.ptab svg { width: 34px; height: 34px; flex: none; }
.ptab::before, .ptab::after { content: ""; position: absolute; z-index: -1; inset: 0; background: #bcc5dd; clip-path: polygon(0 6px, 6px 0, 59px 0, 100% 100%, 0 100%); }
.ptab::after { inset: 1px 1px 1px 1px; background: #d8d8d8; }
.ptab.active { z-index: 2; }
.ptab.active::after { background: #ebecf0; inset: 1px 1px 0 1px; }
.ptab.short { width: 88px; }
.ptab.short::before, .ptab.short::after { clip-path: polygon(0 6px, 6px 0, 40px 0, 100% 100%, 0 100%); }
.panel-gear { position: absolute; right: 3px; bottom: 3px; width: 32px; height: 32px; z-index: 3; }
.panel-gear svg { width: 32px; height: 32px; fill: #bdbdbd; stroke: #b0b0b0; }
.panel-body { flex: 1; display: flex; flex-direction: column; border: 1px solid #bcc5dd; background: #f7f8fb; }
.modes { flex: 1; display: flex; flex-wrap: wrap; align-content: flex-start; gap: 9px; padding: 8px 0 0 12px; }
.mode { width: 63px; height: 63px; border: 2px solid #6e6e6e; background: #dedede; display: grid; place-items: center; }
.mode.on { background: #a6d8f4; }
.mode svg { width: 46px; height: 46px; }
.prop-area { display: flex; justify-content: space-between; height: 64px; }
.prop { flex: 1; margin: 9px -9px -1px 9px; padding-left: 3px; z-index: 1; border: 1px solid #e9eaee; background: #f7f8fb; font-size: 31px; line-height: 56px; }
.v-scroll { width: 38px; background: #f0f0f0; display: flex; flex-direction: column; align-items: center; gap: 24px; padding: 13px 0 0; }
.v-scroll svg, .h-scroll svg { width: 10px; height: 7px; fill: none; stroke: #a0a0a0; stroke-width: 2; }
.h-scroll { display: flex; align-items: center; height: 37px; padding: 0 50px 0 13px; background: linear-gradient(#fff, #fff) 47px 0 / 115px 9px no-repeat, #f0f0f0; }
.h-scroll svg { width: 12px; height: 18px; stroke-width: 4; }
.thumb { width: 32px; height: 28px; margin: 9px auto 0 13px; background: #cbcbcb; }

.osnap { display: flex; gap: 15px; height: 43px; padding: 9px 0 0 14px; align-items: center; border-bottom: 1px solid #bcc5dd; }
.osnap label { display: flex; align-items: center; gap: 8px; line-height: 30px; }
.osnap input { appearance: none; width: 26px; height: 26px; margin: 0; border: 2px solid #333; background: #fff; }
.osnap input:disabled { width: 24px; height: 24px; border: 1px solid #b0b0b0; background: #e1e1e1; }
.osnap .wide { margin-right: 18px; }

.status { display: grid; grid-template-columns: 67px 135px 135px 135px 135px 1fr 100px 66px 71px 71px 110px 89px 140px 42px 32px; height: 34px; }
.status > * { overflow: hidden; text-align: left; border-right: 1px solid #bcc5dd; padding-left: 2px; line-height: 40px; white-space: nowrap; height: 34px; }
.status > .mid { text-align: center; padding: 0; }
.status > :first-child { text-indent: -5px; }
.status > .end { border: 0; }
.status .on { background: #e4f2fc; font-weight: 700; }
.status .layer { display: flex; gap: 5px; padding-left: 6px; }
.layer i { width: 22px; height: 22px; margin-top: 6px; background: #000; }
```
FILE: grid.js
```js
// Ground-plane grid in perspective: (u, v) are major grid units.
const project = (u, v) => {
  const w = 1 - 0.01428 * u + 0.05154 * v;
  const x = (49.035 * u + 55.87 * v + 615.9) / w;
  const y = (5.18 * u - 18.57 * v + 528) / w;
  return x.toFixed(2) + " " + y.toFixed(2);
};
const segment = (u1, v1, u2, v2) => "M" + project(u1, v1) + "L" + project(u2, v2);
let minor = "", major = "";
for (let i = -150; i <= 110; i++) {
  const u = i / 5;
  const d = segment(u, -8, u, 22);
  if (i % 5) minor += d; else major += d;
}
for (let i = -40; i <= 110; i++) {
  const v = i / 5;
  const d = segment(-30, v, 22, v);
  if (i % 5) minor += d; else major += d;
}
document.getElementById("minor").setAttribute("d", minor);
document.getElementById("major").setAttribute("d", major);
document.getElementById("axis-x").setAttribute("d", segment(0, 0, 20, 0));
document.getElementById("axis-y").setAttribute("d", segment(0, 0, 0, 20));
```
